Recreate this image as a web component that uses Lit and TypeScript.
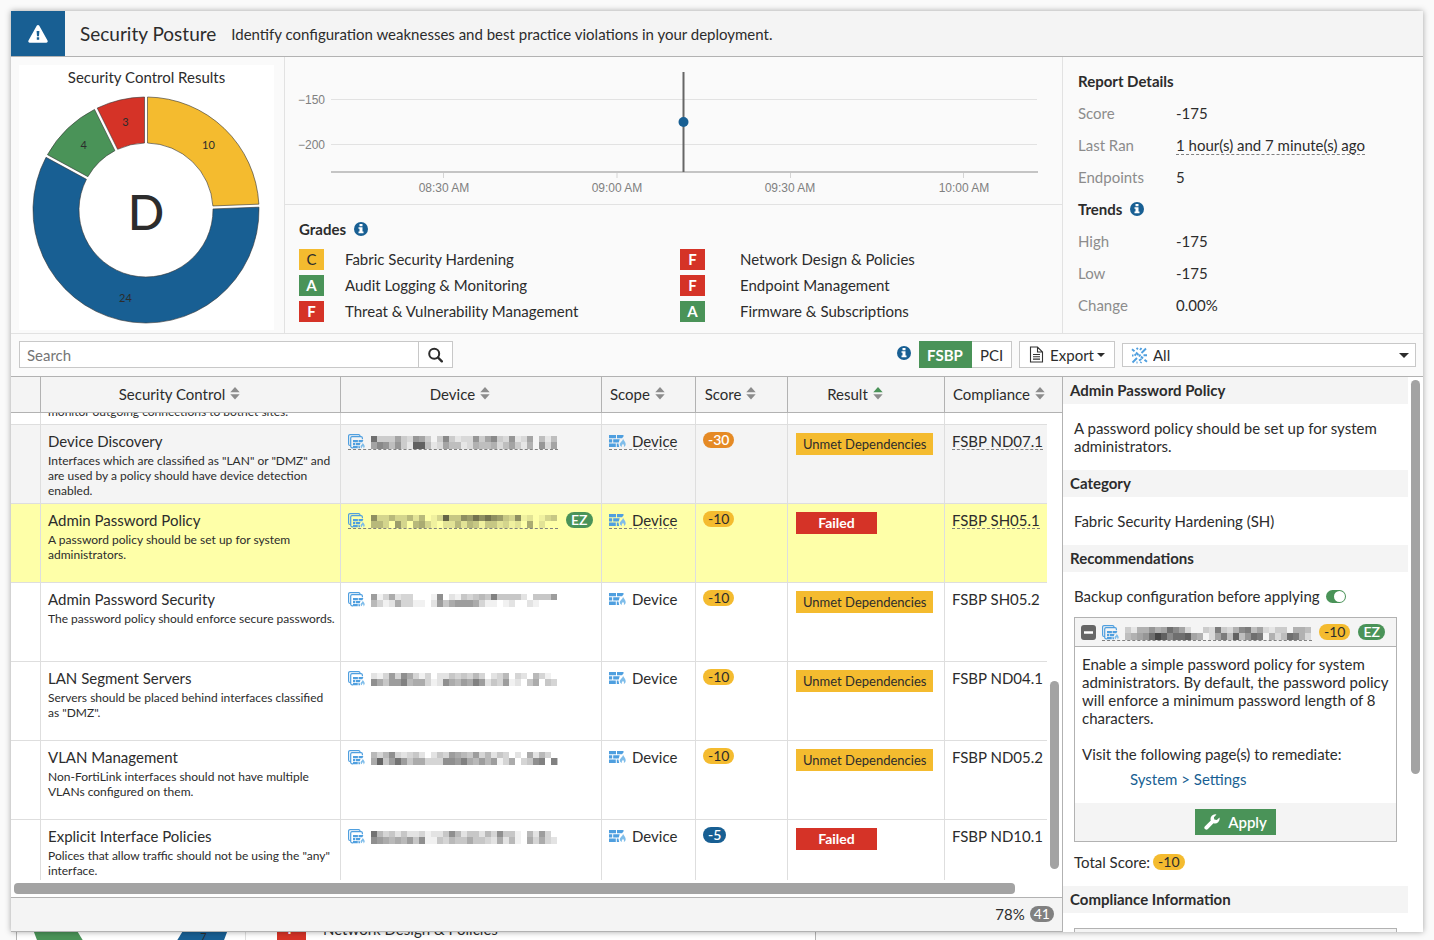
import { LitElement, html, css, svg, nothing } from "lit";
import { customElement, query } from "lit/decorators.js";
import { classMap } from "lit/directives/class-map.js";

interface ControlRow {
  name: string;
  text: string;
  score: number;
  result: string;
  compliance: string;
  mask: [string, string];
  ez?: boolean;
  linked?: boolean;
  state?: string;
}

const ROWS: ControlRow[] = [
  {
    name: "Botnet Connections",
    text: "Botnet detection should be enabled on all of the outgoing interfaces in order to block and\nmonitor outgoing connections to botnet sites.",
    score: -30, result: "Unmet Dependencies", compliance: "FSBP ND06.1",
    mask: ["", ""],
  },
  {
    name: "Device Discovery",
    text: 'Interfaces which are classified as "LAN" or "DMZ" and are used by a policy should have device detection enabled.',
    score: -30, result: "Unmet Dependencies", compliance: "FSBP ND07.1",
    mask: ["a333632763038312273683271260414", "6874731bb4126441254452463150726"], linked: true, state: "hover",
  },
  {
    name: "Admin Password Policy",
    text: "A password policy should be set up for system administrators.",
    score: -10, result: "Failed", compliance: "FSBP SH05.1",
    mask: ["833533525013b4487a8a87438120134", "5530730563102252541442312060200"], ez: true, linked: true, state: "selected",
  },
  {
    name: "Admin Password Security",
    text: "The password policy should enforce secure passwords.",
    score: -10, result: "Unmet Dependencies", compliance: "FSBP SH05.2",
    mask: ["7136233000180214345494444204447", "5312633110274677763110120021000"],
  },
  {
    name: "LAN Segment Servers",
    text: 'Servers should be placed behind interfaces classified as "DMZ".',
    score: -10, result: "Unmet Dependencies", compliance: "FSBP ND04.1",
    mask: ["2137386313022434353023503205310", "8647795663128657697243712046043"],
  },
  {
    name: "VLAN Management",
    text: "Non-FortiLink interfaces should not have multiple VLANs configured on them.",
    score: -10, result: "Unmet Dependencies", compliance: "FSBP ND05.2",
    mask: ["5358323420243765473524302062530", "6b47a746633388796575713603489094"],
  },
  {
    name: "Explicit Interface Policies",
    text: 'Polices that allow traffic should not be using the "any" interface.',
    score: -5, result: "Failed", compliance: "FSBP ND10.1",
    mask: ["a534242231224852442538441052730", "8765657481143544644326251063632"],
  },
];

const COLUMNS = [
  { label: "Security Control" },
  { label: "Device" },
  { label: "Scope" },
  { label: "Score" },
  { label: "Result", sorted: true },
];

const GRADES = [
  ["C", "Fabric Security Hardening"], ["F", "Network Design & Policies"],
  ["A", "Audit Logging & Monitoring"], ["F", "Endpoint Management"],
  ["F", "Threat & Vulnerability Management"], ["A", "Firmware & Subscriptions"],
];

const SLICES = [
  { value: 10, color: "#f4bb2f" },
  { value: 24, color: "#185f93" },
  { value: 4, color: "#4a9358" },
  { value: 3, color: "#d53327" },
];

const infoIcon = html`<svg class="info" width="14" height="14" viewBox="0 0 14 14" aria-hidden="true">
  <circle cx="7" cy="7" r="7" fill="#185f93"/>
  <path d="M5.500 2h3v2.200h-3zM4.500 5.200h4v4.400h1V11.300h-5V9.600h1V6.800h-1z" fill="#fff"/>
</svg>`;

const sortIcon = (active: boolean) => html`<svg width="10" height="13" viewBox="0 0 10 13" aria-hidden="true">
  <path d="M5 0 9.700 5.300H.3z" fill="${active ? "#4a9358" : "#8c8c8c"}"/>
  <path d="M5 12.600 9.700 7.300H.3z" fill="#8c8c8c"/>
</svg>`;

const bricks = svg`
  <path d="M0 0h7v3.300H0zM8 0h6.500v1.500l-1.500 1.800H8zM0 4.200h3.200v3.400H0zM4.200 4.200h6.500L9.700 7.600H4.200zM0 8.500h6.800v3.400H0zM7.800 8.500h1.600l.8 3.400H7.800z" fill="#4f9fdf"/>
  <path d="M14 3.400c.2 1.800 2.700 3 2.700 5.600 0 1.500-.7 2.500-1.900 3 .5-1.400.1-2.400-.9-3.300-.2 1-.9 1.100-1.100 1.900-.1.500 0 .9.200 1.300-1.300-.3-2.200-1.200-2.200-2.600 0-2.300 3.200-3.200 3.200-5.900z" fill="#7fbdea"/>`;

const scopeIcon = html`<svg width="17" height="13" viewBox="0 -1 17 13" aria-hidden="true">${bricks}</svg>`;

const deviceIcon = html`<svg width="17" height="17" viewBox="0 -2 17 17" aria-hidden="true">
  <path d="M3 11.500H2A1.500 1.500 0 0 1 .6 10V2A1.400 1.400 0 0 1 2 .6h8.500A1.400 1.400 0 0 1 12 2M5 13.900H4A1.500 1.500 0 0 1 2.700 12.500V4A1.400 1.400 0 0 1 4 2.700h9A1.400 1.400 0 0 1 14.400 4v1.300" fill="none" stroke="#4f9fdf" stroke-width="1.200"/>
  <g transform="translate(5 6) scale(.7)">${bricks}</g>
</svg>`;

const mosaic = (mask: [string, string]) => html`<svg class="mosaic" width="187" height="13" viewBox="0 0 187 13" shape-rendering="crispEdges" role="img" aria-label="Redacted name">
  ${mask.map((line, r) => [...line].map((c, i) => svg`<rect x=${i * 6} y=${r * 6} width="6" height=${r ? 7 : 6} fill="#111" fill-opacity=${parseInt(c, 16) / 17}></rect>`))}
</svg>`;

const point = (r: number, a: number) => `${(114 + r * Math.sin(a)).toFixed(2)} ${(114 - r * Math.cos(a)).toFixed(2)}`;

function donut() {
  const total = SLICES.reduce((s, x) => s + x.value, 0);
  const R = 113, r = 67, gap = 1.5;
  let from = 0;
  return SLICES.map((s) => {
    const a = (from / total) * Math.PI * 2;
    from += s.value;
    const b = (from / total) * Math.PI * 2;
    const go = gap / R, gi = gap / r;
    const large = b - a > Math.PI ? 1 : 0;
    const d = `M${point(R, a + go)}A${R} ${R} 0 ${large} 1 ${point(R, b - go)}L${point(r, b - gi)}A${r} ${r} 0 ${large} 0 ${point(r, a + gi)}Z`;
    const [x, y] = point(90, (a + b) / 2).split(" ");
    return svg`<path d=${d} fill=${s.color} stroke="#333" stroke-opacity=".6" stroke-width="1"></path>
      <text x=${x} y=${Number(y) + 4} text-anchor="middle" font-size="11" fill="#2c2c2c">${s.value}</text>`;
  });
}

@customElement("app-root")
export class AppRoot extends LitElement {
  @query(".scroller") scroller!: HTMLElement;

  static styles = css`
    :host {
      display: flex; flex-direction: column; height: 100vh; box-sizing: border-box;
      padding: 11px 11px 0; background: #fafafa; overflow: hidden;
      font: 15px/18px Lato, "Open Sans", sans-serif; color: #2c2c2c;
    }
    * { box-sizing: border-box; }
    svg { display: block; flex: none; }
    h1, h2, h3, p, dl, dd { margin: 0; }
    h2, h3 { font-size: 15px; line-height: 18px; font-weight: 700; }
    a { color: inherit; text-decoration: none; }
    button, input, select { font: inherit; color: inherit; margin: 0; }

    .dialog {
      flex: 1; min-height: 0; display: flex; flex-direction: column; background: #fafafa;
      box-shadow: 0 0 6px rgba(0, 0, 0, .35); position: relative; z-index: 1;
    }
    .title { display: flex; height: 46px; flex: none; background: #f4f4f4; border-bottom: 1px solid #b2b2b2; }
    .title-icon { width: 54px; background: #185f93; display: grid; place-items: center; }
    .title h1 { font-size: 19px; line-height: 24px; font-weight: 400; padding: 11px 15px; }
    .title p { padding-top: 14px; }

    .summary { display: flex; flex: none; border-bottom: 1px solid #e2e2e2; }
    .results { width: 274px; padding: 8px 10px 3px 8px; border-right: 1px solid #e2e2e2; }
    .results-card { background: #fff; height: 265px; text-align: center; padding-top: 3px; }
    .results-card svg { margin: 10px 0 0 13px; }
    .middle { flex: 1; min-width: 0; }
    .trend { border-bottom: 1px solid #e2e2e2; }
    .trend svg { width: 100%; height: auto; }
    .heading { display: flex; align-items: center; gap: 8px; }
    .grades { padding: 15px 0 0 14px; }
    .grade-grid {
      display: grid; grid-template-columns: 46fr 335fr 60fr 322fr; grid-auto-rows: 26px;
      align-items: center; padding-top: 8px;
    }
    .grade { width: 25px; height: 21px; line-height: 20px; text-align: center; font-weight: 700; color: #fff; }
    .gA { background: #4a9358; }
    .gF { background: #d53327; }
    .gC { background: #f4bb2f; color: #2c2c2c; font-weight: 400; }
    .report { width: 361px; border-left: 1px solid #e2e2e2; padding: 8px 15px 10px; }
    .report h2 { height: 32px; }
    .report dl { display: grid; grid-template-columns: 98px 1fr; }
    .report dt, .report dd { height: 32px; line-height: 32px; }
    .report dt { color: #8c8c8c; }
    .dashed { border-bottom: 1px dashed #808080; }

    .toolbar { display: flex; align-items: flex-start; flex: none; height: 43px; padding: 7px 7px 0 8px; border-bottom: 1px solid #b2b2b2; }
    .search { display: flex; flex: 0 1 434px; }
    .search input { flex: 1; min-width: 0; height: 27px; border: 1px solid #c8c8c8; background: #fff; padding: 0 7px; border-radius: 0; outline: none; }
    .search input::placeholder { color: #757575; opacity: 1; }
    .box { height: 27px; border: 1px solid #c8c8c8; background: #fff; padding: 0 9px; display: flex; align-items: center; }
    .search .box { border-left: 0; }
    .standards { margin-left: auto; display: flex; }
    .standards .info { margin: 5px 8px 0 0; }
    .standards .box { padding: 0 8px; border-left: 0; }
    .standards .active { background: #4a9358; border-color: #4a9358; color: #fff; font-weight: 700; }
    .export { margin: 0 7px; gap: 6px; }
    .export .caret { margin-left: -3px; }
    .filter { position: relative; flex: 0 1 294px; height: 24px; margin-top: 2px; }
    .filter select { width: 100%; height: 24px; appearance: none; border: 1px solid #c8c8c8; border-radius: 0; background: #fff; padding: 0 26px 0 30px; }
    .filter svg { position: absolute; top: 4px; left: 9px; pointer-events: none; }
    .filter .caret { top: 10px; left: auto; right: 7px; }

    .main { flex: 1; min-height: 0; display: flex; background: #fff; }
    .list { flex: 1; min-width: 0; display: flex; flex-direction: column; position: relative; }
    .scroller { flex: 1; min-height: 0; overflow: auto; scrollbar-width: none; }
    table { width: 100%; border-collapse: separate; border-spacing: 0; table-layout: fixed; }
    th {
      position: sticky; top: 0; z-index: 1; height: 36px; padding: 0 22px 2px 0; background: #f4f4f4; font-weight: 400;
      border-right: 1px solid #b2b2b2; border-bottom: 1px solid #b2b2b2;
    }
    th button { display: flex; width: 100%; align-items: center; justify-content: center; gap: 5px; border: 0; background: none; padding: 0; white-space: nowrap; }
    th:last-child { border-right: 0; padding: 0 0 2px 8px; }
    th:last-child button { justify-content: flex-start; }
    .c-pick { width: 30px; } .c-device { width: 261px; } .c-scope { width: 94px; } .c-score { width: 92px; }
    .c-result { width: 157px; } .c-comp { width: 102px; } .c-gutter { width: 15px; }
    td { height: 79px; padding: 7px 7px 0; vertical-align: top; border-right: 1px solid #dedede; border-bottom: 1px solid #dedede; white-space: nowrap; }
    td:nth-last-child(-n + 2) { border-right: 0; }
    td:last-child { border-bottom: 0; padding: 0; }
    .hover td:not(:last-child) { background: #f4f4f4; }
    .selected td:not(:last-child) { background: #feffa8; }
    .name { white-space: normal; padding-right: 5px; }
    .desc { font-size: 12px; line-height: 15px; padding-top: 3px; white-space: pre-line; }
    .line { display: flex; align-items: center; gap: 8px; }
    .tag { display: inline-flex; align-items: center; gap: 6px; height: 18px; border-bottom: 1px solid transparent; }
    .tag.dashed { border-bottom: 1px dashed #808080; }
    .tag .mosaic { margin-top: 4px; }
    .pill {
      display: inline-block; height: 16px; line-height: 16px; border-radius: 8px; padding: 0 5px; font-size: 14px;
      background: #f4bb2f; vertical-align: top;
    }
    .s-30 { background: #e58a25; color: #fff; font-weight: 600; }
    .s-5 { background: #185f93; color: #fff; font-weight: 600; }
    .ez { background: #4a9358; color: #fff; font-weight: 600; }
    .count { background: #808080; color: #fff; padding: 0 4px; }
    .result { display: inline-block; height: 22px; line-height: 22px; padding: 0 7px; font-size: 13px; background: #f4bb2f; min-width: 81px; text-align: center; margin: 1px 0 0 1px; }
    .failed { background: #d53327; color: #fff; font-size: 14px; font-weight: 700; }
    .hbar { flex: none; height: 17px; padding: 3px 47px 3px 3px; }
    .hbar div { height: 11px; border-radius: 4px; background: #a3a3a3; }
    .vbar { position: absolute; right: 3px; bottom: 63px; width: 9px; height: 188px; border-radius: 5px; background: #a3a3a3; }
    .foot {
      flex: none; height: 35px; border-top: 1px solid #b2b2b2; border-bottom: 1px solid #b2b2b2; background: #f4f4f4;
      display: flex; align-items: center; justify-content: flex-end; gap: 5px; padding: 0 8px 2px 0;
    }

    .side { width: 361px; flex: none; border-left: 1px solid #b2b2b2; position: relative; overflow: hidden; }
    .side-scroll { height: 100%; padding-right: 15px; overflow: auto; scrollbar-width: none; }
    .side h2 { background: #f4f4f4; height: 27px; line-height: 26px; padding: 0 7px; }
    .block { padding: 15px 11px; }
    .side-bar { position: absolute; right: 3px; top: 3px; width: 9px; height: 394px; border-radius: 5px; background: #a3a3a3; }
    .switch { display: flex; align-items: center; gap: 6px; height: 18px; margin-bottom: 12px; }
    .switch input { appearance: none; width: 20px; height: 13px; border-radius: 7px; background: #4a9358; padding: 1px; display: flex; justify-content: flex-end; }
    .switch input::before { content: ""; width: 11px; height: 11px; border-radius: 50%; background: #fff; }
    .card { border: 1px solid #b2b2b2; }
    .card-head { display: flex; align-items: center; height: 29px; background: #f4f4f4; border-bottom: 1px solid #b2b2b2; padding: 0 6px; }
    .card-head button { border: 0; background: none; padding: 0; margin-right: 6px; }
    .card-head .pill { margin-left: 8px; }
    .card-head .tag + .pill { margin-left: 7px; }
    .card-body { padding: 8px 7px 15px; }
    .card-body p + p { padding-top: 18px; }
    .card-body a { display: block; color: #185f93; margin: 7px 0 0 48px; }
    .card-foot { background: #f4f4f4; height: 38px; display: flex; justify-content: center; padding-top: 6px; }
    .apply { height: 26px; border: 0; background: #4a9358; color: #fff; font-weight: 600; padding: 0 9px; display: flex; align-items: center; gap: 8px; }
    .total { padding-top: 11px; display: flex; gap: 3px; }
    .total .pill { margin-top: 1px; }

    .behind { flex: none; height: 8px; margin-left: 5px; width: 800px; overflow: hidden; background: #fff; border: solid #b2b2b2; border-width: 0 1px; display: flex; }
    .behind svg { width: 229px; border-right: 1px solid #dedede; }
    .behind-row { display: flex; align-items: flex-end; padding-left: 31px; }
    .behind-grade { width: 29px; height: 21px; background: #d53327; color: #fff; font-weight: 700; text-align: center; line-height: 18px; margin-right: 17px; }
    .behind-text { height: 18px; margin-bottom: 2px; }
  `;

  firstUpdated() {
    this.scroller.scrollTop = 67;
  }

  private row(r: ControlRow) {
    const tag = classMap({ tag: true, dashed: !!r.linked });
    return html`<tr class=${r.state ?? nothing}>
      <td></td>
      <td class="name">${r.name}<div class="desc">${r.text}</div></td>
      <td><div class="line"><span class=${tag}>${deviceIcon}${mosaic(r.mask)}</span>${r.ez ? html`<span class="pill ez">EZ</span>` : nothing}</div></td>
      <td><div class="line"><span class=${tag}>${scopeIcon}Device</span></div></td>
      <td><span class="pill s${r.score}">${r.score}</span></td>
      <td><span class="result ${r.result === "Failed" ? "failed" : ""}">${r.result}</span></td>
      <td><div class="line"><span class=${tag}>${r.compliance}</span></div></td>
      <td></td>
    </tr>`;
  }

  render() {
    const caret = html`<svg class="caret" width="10" height="5" viewBox="0 0 10 5" aria-hidden="true"><path d="M0 0h10L5 5z" fill="#2c2c2c"/></svg>`;
    return html`
      <section class="dialog">
        <header class="title">
          <div class="title-icon">
            <svg width="20" height="18" viewBox="0 0 20 18" aria-hidden="true">
              <path d="M8.700.8a1.500 1.500 0 0 1 2.600 0l8.200 14.700a1.500 1.500 0 0 1-1.300 2.300H1.800A1.500 1.500 0 0 1 .5 15.500z" fill="#fff"/>
              <path d="M8.600 6h2.800l-.4 5.200H9zM8.800 12.300h2.400v2.400H8.800z" fill="#185f93"/>
            </svg>
          </div>
          <h1>Security Posture</h1>
          <p>Identify configuration weaknesses and best practice violations in your deployment.</p>
        </header>

        <div class="summary">
          <div class="results">
            <div class="results-card">
              Security Control Results
              <svg width="228" height="228" viewBox="0 0 228 228" font-family="Lato">
                ${donut()}
                <text x="114" y="134" text-anchor="middle" font-size="48" font-weight="500" fill="#2c2c2c">D</text>
              </svg>
            </div>
          </div>
          <div class="middle">
            <div class="trend">
              <svg viewBox="0 0 777 147" font-family="Liberation Sans, Arial" font-size="12" fill="#808080">
                <path d="M46 42.500H752M46 87.500H752" stroke="#e2e2e2"/>
                <path d="M46 115H753" stroke="#c4c4c4" stroke-width="2"/>
                <path d="M158.500 116v5M332 116v5M505.500 116v5M678.500 116v5" stroke="#d4d4d4"/>
                <text x="40" y="47" text-anchor="end">−150</text>
                <text x="40" y="92" text-anchor="end">−200</text>
                <text x="159" y="135" text-anchor="middle">08:30 AM</text>
                <text x="332" y="135" text-anchor="middle">09:00 AM</text>
                <text x="505" y="135" text-anchor="middle">09:30 AM</text>
                <text x="679" y="135" text-anchor="middle">10:00 AM</text>
                <path d="M398.500 15V115" stroke="#666" stroke-width="2"/>
                <circle cx="398.500" cy="65" r="5" fill="#185f93"/>
              </svg>
            </div>
            <div class="grades">
              <h2 class="heading">Grades ${infoIcon}</h2>
              <div class="grade-grid">
                ${GRADES.map(([g, t]) => html`<span class="grade g${g}">${g}</span><span>${t}</span>`)}
              </div>
            </div>
          </div>
          <div class="report">
            <h2 class="heading">Report Details</h2>
            <dl>
              <dt>Score</dt><dd>-175</dd>
              <dt>Last Ran</dt><dd><span class="dashed">1 hour(s) and 7 minute(s) ago</span></dd>
              <dt>Endpoints</dt><dd>5</dd>
            </dl>
            <h2 class="heading">Trends ${infoIcon}</h2>
            <dl>
              <dt>High</dt><dd>-175</dd>
              <dt>Low</dt><dd>-175</dd>
              <dt>Change</dt><dd>0.00%</dd>
            </dl>
          </div>
        </div>

        <div class="toolbar">
          <div class="search">
            <input type="text" placeholder="Search" aria-label="Search" />
            <button class="box" aria-label="Run search">
              <svg width="15" height="16" viewBox="0 0 15 16"><circle cx="6.200" cy="6.700" r="5" fill="none" stroke="#2c2c2c" stroke-width="2"/><path d="m10 10.500 3.800 3.800" stroke="#2c2c2c" stroke-width="2.400" stroke-linecap="round"/></svg>
            </button>
          </div>
          <div class="standards">${infoIcon}<button class="box active">FSBP</button><button class="box">PCI</button></div>
          <button class="box export">
            <svg width="15" height="17" viewBox="0 0 15 17" aria-hidden="true"><path d="M1.500 1h7L13.500 6v10h-12zM8.500 1v5h5M4 8.500h7M4 10.800h7M4 13.100h7" fill="none" stroke="#333" stroke-width="1.100"/></svg>
            Export<svg class="caret" width="8" height="4" viewBox="0 0 8 4" aria-hidden="true"><path d="M0 0h8L4 4z" fill="#2c2c2c"/></svg>
          </button>
          <div class="filter">
            <select aria-label="Device filter"><option>All</option></select>
            <svg width="17" height="17" viewBox="0 0 17 17" aria-hidden="true">
              <path d="M1.500 15.500 6 11M8 9.500l1.500-2M10.500 6 15 1.500M1 2.200l2.500 2M5 5.500 7.500 8M10 9.500l2 2M13.500 12.800l2.500 2M5.500 1l1.500 1.200M9 3l1.500-2M1 8.500h1.500M3.500 7.200 5 8.500M12.500 8.200h3.500M8 13.500l2.500-1.500M9.500 15.800l.8-1M5.500 15.500h1" stroke="#4f9fdf" stroke-width="1.900" fill="none"/>
            </svg>
            ${caret}
          </div>
        </div>

        <div class="main">
          <div class="list">
            <div class="scroller">
              <table>
                <colgroup>
                  <col class="c-pick" /><col /><col class="c-device" /><col class="c-scope" /><col class="c-score" />
                  <col class="c-result" /><col class="c-comp" /><col class="c-gutter" />
                </colgroup>
                <thead><tr>
                  <th></th>
                  ${COLUMNS.map((c) => html`<th><button>${c.label}${sortIcon(!!c.sorted)}</button></th>`)}
                  <th colspan="2"><button>Compliance${sortIcon(false)}</button></th>
                </tr></thead>
                <tbody>${ROWS.map((r) => this.row(r))}</tbody>
              </table>
            </div>
            <div class="hbar"><div></div></div>
            <div class="vbar"></div>
            <div class="foot">78% <span class="pill count">41</span></div>
          </div>

          <aside class="side">
            <div class="side-scroll">
              <h2>Admin Password Policy</h2>
              <p class="block">A password policy should be set up for system administrators.</p>
              <h2>Category</h2>
              <p class="block">Fabric Security Hardening (SH)</p>
              <h2>Recommendations</h2>
              <div class="block">
                <label class="switch">Backup configuration before applying <input type="checkbox" role="switch" checked /></label>
                <div class="card">
                  <div class="card-head">
                    <button aria-label="Collapse">
                      <svg width="15" height="15" viewBox="0 0 15 15"><rect width="15" height="15" rx="3" fill="#666"/><path d="M3 7.500h9" stroke="#fff" stroke-width="2.500"/></svg>
                    </button>
                    <span class="tag dashed">${deviceIcon}${mosaic(["3155756a86200329325894621330554", "4567adb8aab6502694b47a90524a952"])}</span>
                    <span class="pill">-10</span><span class="pill ez">EZ</span>
                  </div>
                  <div class="card-body">
                    <p>Enable a simple password policy for system administrators. By default, the password policy will enforce a minimum password length of 8 characters.</p>
                    <p>Visit the following page(s) to remediate:</p>
                    <a href="#settings">System &gt; Settings</a>
                  </div>
                  <div class="card-foot">
                    <button class="apply">
                      <svg width="16" height="16" viewBox="0 0 16 16" aria-hidden="true"><path d="M15.500 3.600a4.700 4.700 0 0 1-6 5.600l-5.600 5.900a2 2 0 0 1-2.900-2.900L6.800 6.600A4.700 4.700 0 0 1 12.500.5L9.900 3.200l.4 2.400 2.500.4z" fill="#fff"/></svg>
                      Apply
                    </button>
                  </div>
                </div>
                <div class="total">Total Score: <span class="pill">-10</span></div>
              </div>
              <h2>Compliance Information</h2>
              <div class="block"><div class="card"><div class="card-head"></div></div></div>
            </div>
            <div class="side-bar"></div>
          </aside>
        </div>
      </section>

      <div class="behind">
        <svg height="8" viewBox="0 0 229 8" preserveAspectRatio="xMinYMin" font-family="Lato">
          <path d="M17 0h44l5 8H20z" fill="#4a9358"/><path d="M166 0h45l-3 8h-47z" fill="#185f93"/>
          <text x="184" y="9" font-size="11" fill="#2c2c2c">7</text>
        </svg>
        <div class="behind-row"><span class="behind-grade">F</span><span class="behind-text">Network Design &amp; Policies</span></div>
      </div>`;
  }
}
